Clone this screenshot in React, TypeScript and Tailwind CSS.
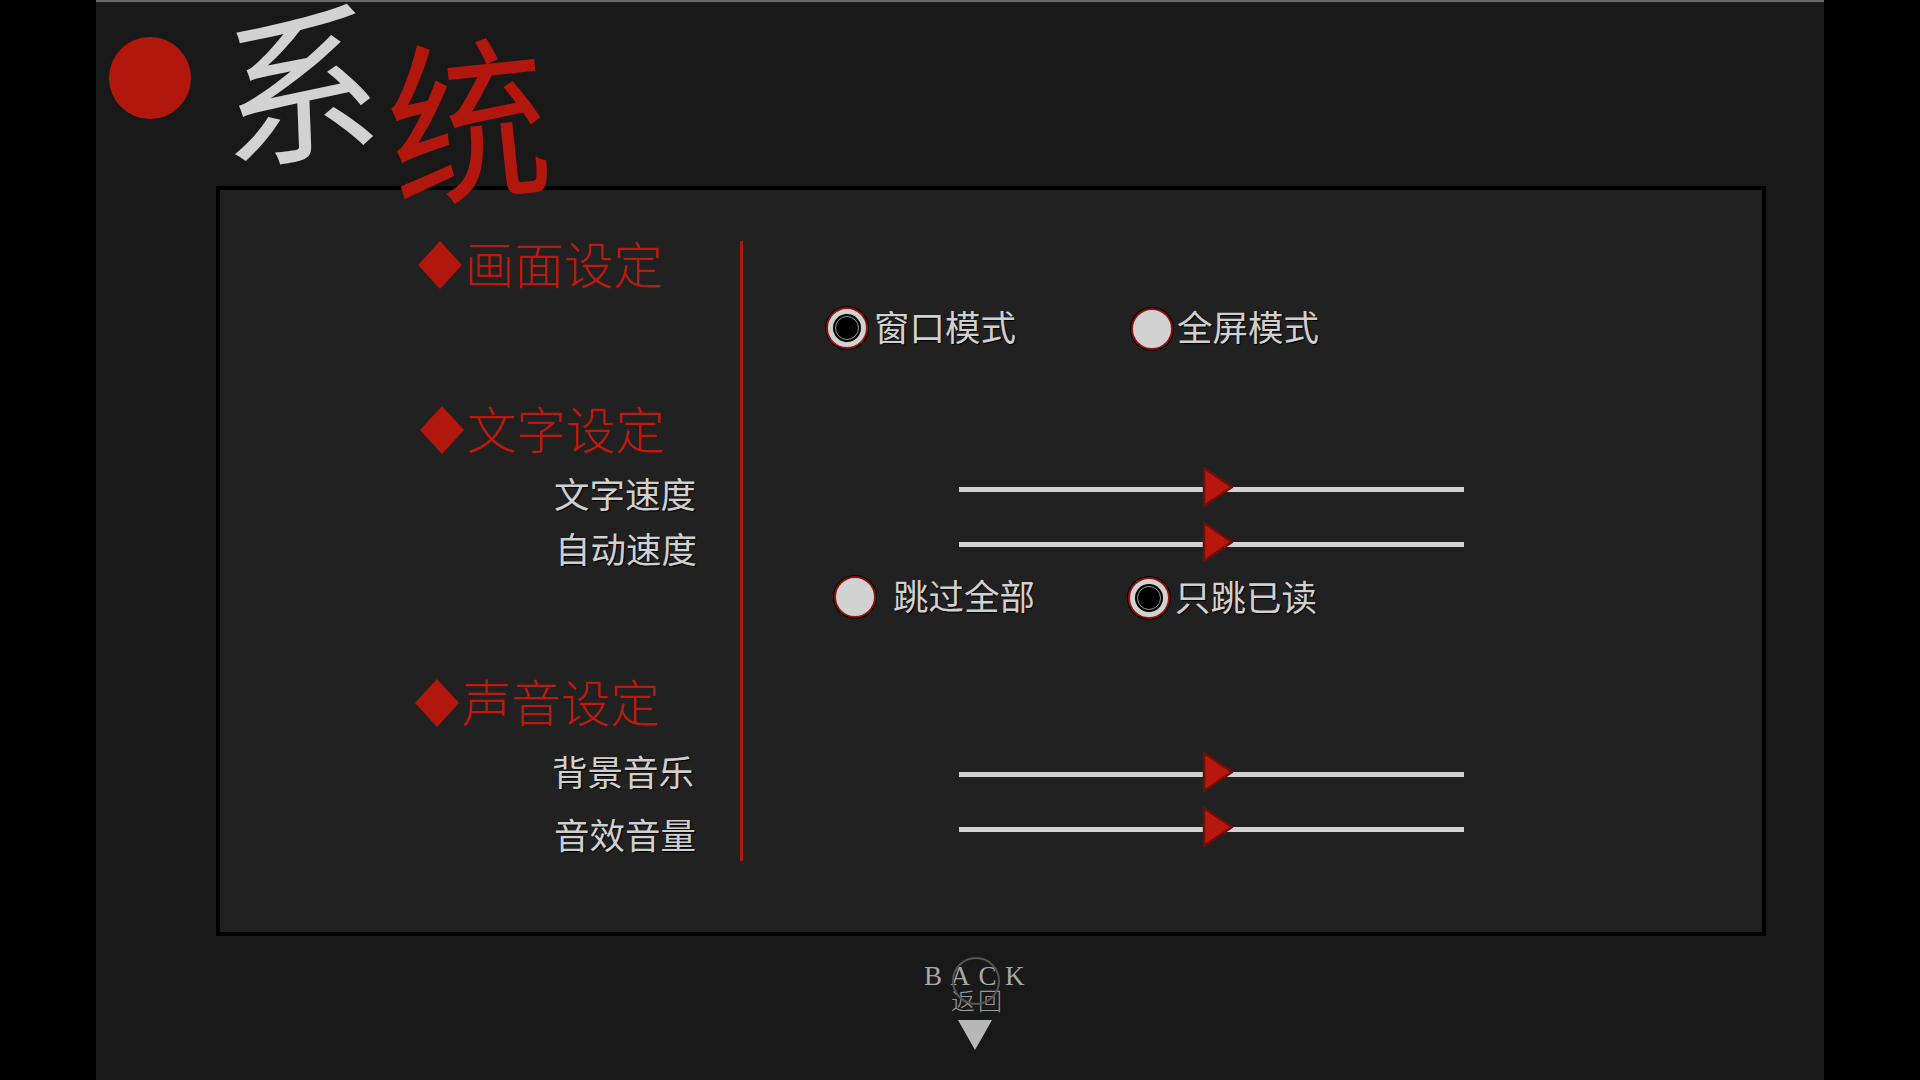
const cjk = "font-['Noto_Sans_CJK_SC','Liberation_Sans',sans-serif]"

function Diamond() {
  return (
    <svg width="44" height="48" viewBox="0 0 44 48" className="shrink-0 mb-[2px]">
      <polygon points="22,0 44,24 22,48 0,24" fill="#b1170d" />
    </svg>
  )
}

function Heading({ text, className }: { text: string; className: string }) {
  return (
    <div className={`flex items-center h-[50px] gap-[3px] ${className}`}>
      <Diamond />
      <span className="text-[49.5px] leading-[50px] font-light text-[#bd1a0f] mb-[6px]">{text}</span>
    </div>
  )
}

function Label({ text, className }: { text: string; className: string }) {
  return (
    <div className={`h-[40px] text-[35.5px] leading-[36px] text-[#d0d0d0] [text-shadow:1px_1px_1px_#000] ${className}`}>
      {text}
    </div>
  )
}

function Radio({ text, checked, gap, className }: { text: string; checked?: boolean; gap: string; className: string }) {
  return (
    <div className={`flex items-center ${gap} ${className}`}>
      <div className="w-[42px] h-[42px] rounded-full bg-[#d2d2d2] border-2 border-[#8c130c] shadow-[0_0_0_1px_#000] flex items-center justify-center shrink-0">
        {checked && (
          <div className="w-[28px] h-[28px] rounded-full bg-black flex items-center justify-center">
            <div className="w-[24px] h-[24px] rounded-full bg-black border border-[#999]" />
          </div>
        )}
      </div>
      <span className="text-[35.5px] leading-[40px] text-[#d0d0d0] mb-[5px] [text-shadow:1px_1px_1px_#000]">{text}</span>
    </div>
  )
}

function Slider({ className }: { className: string }) {
  return (
    <div className={`relative w-[505px] h-[41px] ml-[216px] flex items-center ${className}`}>
      <div className="w-full h-[5px] bg-[#d2d2d2]" />
      <svg width="32" height="42" viewBox="0 0 32 42" className="absolute left-[243px] top-[-3px]">
        <polygon points="2,2 30,21 2,40" fill="#b8170d" stroke="#6e0f09" strokeWidth="2.5" strokeLinejoin="round" />
      </svg>
    </div>
  )
}

export default function App() {
  return (
    <div className={`w-full h-[1080px] bg-black flex justify-center overflow-hidden ${cjk}`}>
      <div className="w-[1728px] h-full bg-[#191919] border-t-2 border-[#6a6a6a] flex flex-col">
        {/* 标题 */}
        <div className="h-[184px] flex shrink-0">
          <div className="w-[82px] h-[82px] rounded-full bg-[#b1170d] ml-[13px] mt-[35px] shrink-0" />
          <span className="block w-[170px] h-[150px] ml-[27px] text-[166px] leading-[150px] text-[#d2d2d2] rotate-[-8deg] skew-x-[-6deg] scale-x-[0.97]">
            系
          </span>
          <span className="block relative z-10 w-[170px] h-[150px] ml-[-4px] mt-[35px] text-[166px] leading-[150px] text-[#b1170d] rotate-[-6deg] scale-x-[0.97] scale-y-[1.06]">
            统
          </span>
        </div>

        {/* 设定面板 */}
        <div className="ml-[120px] w-[1550px] h-[750px] border-4 border-black bg-[#212121] flex shrink-0">
          <div className="w-[520px] shrink-0 pt-[51px]">
            <Heading text="画面设定" className="ml-[198px]" />
            <Heading text="文字设定" className="ml-[200px] mt-[115px]" />
            <Label text="文字速度" className="ml-[334px] mt-[19px]" />
            <Label text="自动速度" className="ml-[335px] mt-[15px]" />
            <Heading text="声音设定" className="ml-[195px] mt-[109px]" />
            <Label text="背景音乐" className="ml-[332px] mt-[24px]" />
            <Label text="音效音量" className="ml-[334px] mt-[23px]" />
          </div>

          <div className="w-[3px] h-[620px] mt-[51px] bg-[#b1170d] shrink-0" />

          <div className="flex-1 flex flex-col pt-[116px]">
            <div className="flex h-[44px]">
              <Radio text="窗口模式" checked gap="gap-[6px]" className="ml-[83px]" />
              <Radio text="全屏模式" gap="gap-[4px]" className="ml-[115px] mt-[1px]" />
            </div>
            <Slider className="mt-[119px]" />
            <Slider className="mt-[14px]" />
            <div className="flex h-[44px] mt-[10px]">
              <Radio text="跳过全部" gap="gap-[17px]" className="ml-[91px]" />
              <Radio text="只跳已读" checked gap="gap-[5px]" className="ml-[93px] mt-[2px]" />
            </div>
            <Slider className="mt-[135px]" />
            <Slider className="mt-[14px]" />
          </div>
        </div>

        {/* 返回 */}
        <div className="flex-1 flex justify-center">
          <div className="relative flex flex-col items-center w-[100px] mt-[26px] ml-[30px]">
            <div className="absolute left-[27px] top-[-5px] w-[48px] h-[48px] rounded-full border-2 border-[#555]" />
            <div className="font-['Liberation_Serif',serif] text-[27px] leading-[28px] tracking-[8.5px] text-[#a8a8a8] whitespace-nowrap ml-[7px]">
              BACK
            </div>
            <div className="text-[24px] leading-[24px] font-light text-[#999] mt-[-2px] ml-[6px] tracking-[3px]">返回</div>
            <svg width="34" height="30" viewBox="0 0 34 30" className="mt-[8px]">
              <polygon points="0,0 34,0 17,30" fill="#b8b8b8" />
            </svg>
          </div>
        </div>
      </div>
    </div>
  )
}
